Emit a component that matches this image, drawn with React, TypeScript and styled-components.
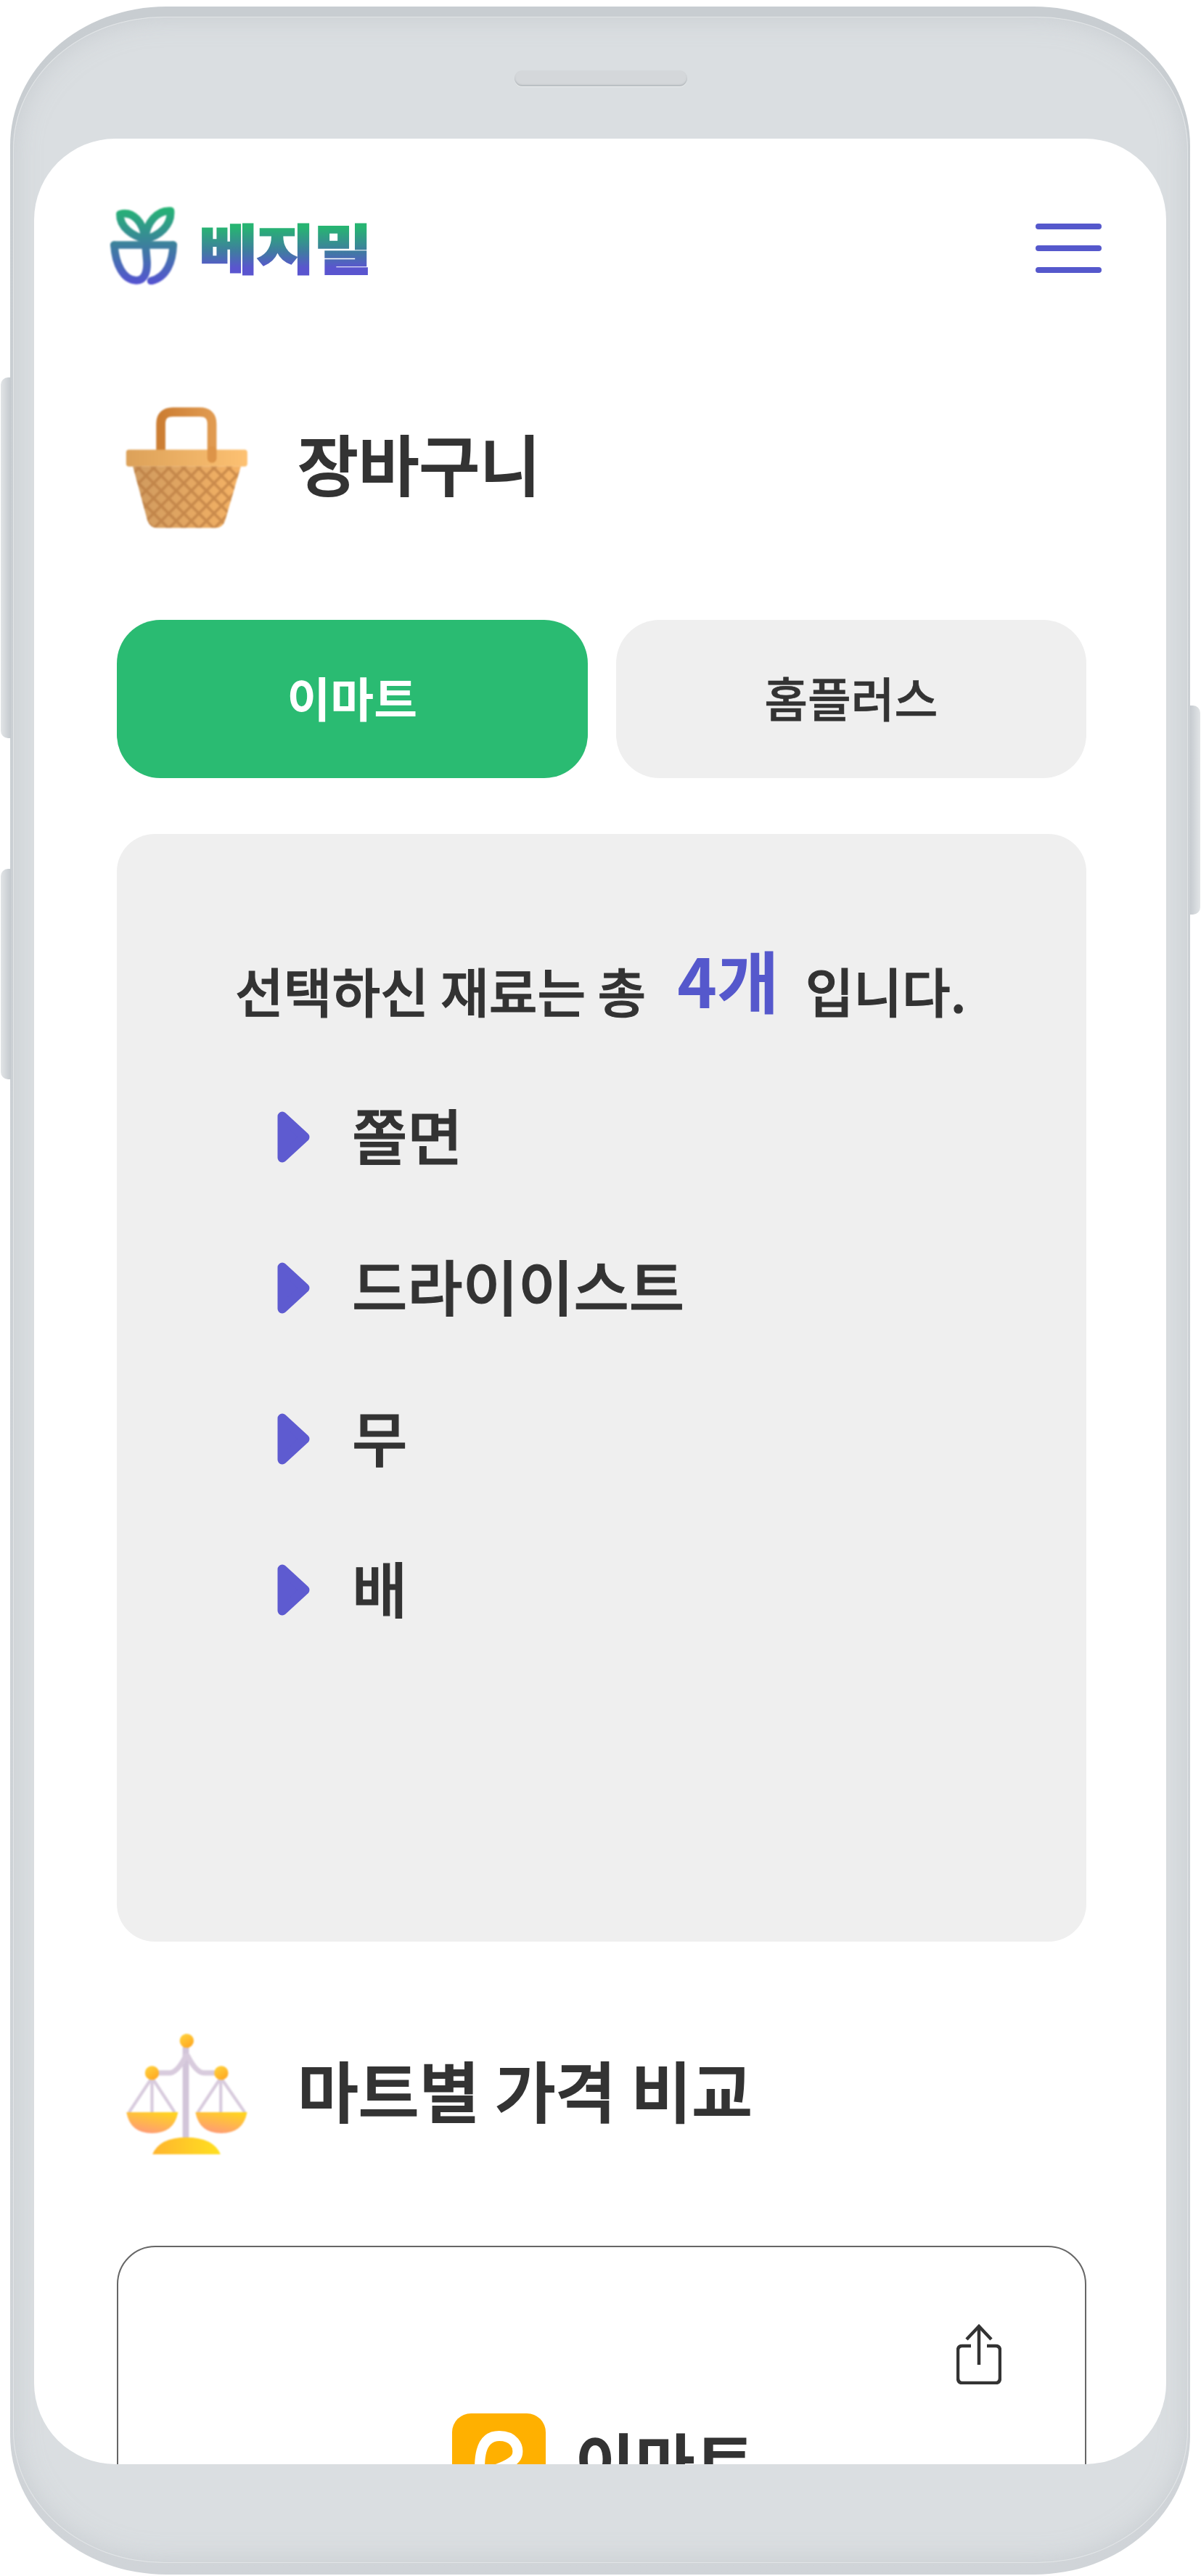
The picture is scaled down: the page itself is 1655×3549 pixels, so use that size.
import React from "react";
import styled, { createGlobalStyle } from "styled-components";

const GlobalStyle = createGlobalStyle`
  html, body {
    margin: 0;
    padding: 0;
    background: #ffffff;
  }
  * {
    box-sizing: border-box;
  }
`;

const Page = styled.div`
  width: 1655px;
  height: 3549px;
  padding: 9px 15px 2px 14px;
  overflow: hidden;
  font-family: "Noto Sans CJK KR", "Noto Sans", sans-serif;
  color: #333333;
`;

const Phone = styled.div`
  position: relative;
  height: 3538px;
  padding: 182px 33px 152px 33px;
  border-radius: 215px / 192px;
  background: linear-gradient(180deg, #c8cdd1 0%, #d0d4d8 100%);
  &::before {
    content: "";
    position: absolute;
    top: 14px;
    left: 4px;
    right: 3px;
    bottom: 16px;
    border-radius: 208px / 182px;
    border: 1px solid #e2e5e7;
    background: #dadee1;
    box-shadow: inset 0 0 34px rgba(184, 190, 195, 0.55);
  }
`;

const SideButton = styled.div<{ $side: "left" | "right"; $top: number; $height: number }>`
  position: absolute;
  top: ${(p) => p.$top}px;
  height: ${(p) => p.$height}px;
  width: 14px;
  ${(p) =>
    p.$side === "left"
      ? `left: -13px; border-radius: 10px 0 0 10px; background: linear-gradient(90deg, #e2e5e7, #c4c9ce);`
      : `right: -14px; border-radius: 0 10px 10px 0; background: linear-gradient(90deg, #c6cbd0, #e2e5e7);`}
`;

const Speaker = styled.div`
  position: absolute;
  top: 88px;
  left: 695px;
  width: 238px;
  height: 22px;
  border-radius: 11px;
  background: #d4d7da;
  box-shadow: inset 0 -2px 2px rgba(170, 175, 180, 0.7), 0 1px 0 rgba(240, 242, 243, 0.8);
`;

const Screen = styled.div`
  position: relative;
  height: 3204px;
  overflow: hidden;
  border-radius: 112px;
  background: #ffffff;
`;

const Header = styled.header`
  display: flex;
  align-items: flex-start;
  justify-content: space-between;
  padding: 94px 89px 0 105px;
`;

const Logo = styled.div`
  display: flex;
  align-items: center;
  gap: 30px;
`;

const WordMark = styled.span`
  font-size: 88px;
  line-height: 107px;
  font-weight: 900;
  letter-spacing: -2px;
  -webkit-text-stroke: 2px transparent;
  background: linear-gradient(180deg, #27b472 22%, #3f7d9f 58%, #5a55cf 84%);
  -webkit-background-clip: text;
  background-clip: text;
  color: transparent;
  transform: scaleY(0.84);
`;

const MenuButton = styled.button`
  display: flex;
  flex-direction: column;
  gap: 22px;
  width: 91px;
  margin-top: 23px;
  padding: 0;
  border: 0;
  background: none;
`;

const MenuBar = styled.span`
  display: block;
  height: 8px;
  border-radius: 4px;
  background: #5558cc;
`;

const Content = styled.main`
  padding: 168px 110px 0 114px;
`;

const TitleRow = styled.div`
  display: flex;
  align-items: center;
  gap: 69px;
  padding-left: 12px;
`;

const Title = styled.h2`
  margin: 0;
  padding-bottom: 16px;
  font-size: 91px;
  line-height: 152px;
  font-weight: 500;
  -webkit-text-stroke: 2px #333333;
  color: #333333;
`;

const Tabs = styled.div`
  display: grid;
  grid-template-columns: 1fr 1fr;
  gap: 39px;
  margin-top: 126px;
`;

const Tab = styled.button<{ $active?: boolean }>`
  height: 218px;
  padding: 0 0 6px;
  border: 0;
  border-radius: 60px;
  font-family: inherit;
  font-size: 65px;
  font-weight: ${(p) => (p.$active ? 700 : 500)};
  -webkit-text-stroke: ${(p) => (p.$active ? "0" : "0.6px #333333")};
  color: ${(p) => (p.$active ? "#ffffff" : "#333333")};
  background: ${(p) => (p.$active ? "#2abb72" : "#efefef")};
`;

const Panel = styled.section`
  height: 1526px;
  margin-top: 77px;
  margin-bottom: 126px;
  padding: 153px 0 0 163px;
  border-radius: 52px;
  background: #efefef;
`;

const Summary = styled.p`
  height: 100px;
  margin: 0;
  font-size: 72.5px;
  line-height: 100px;
  font-weight: 500;
  -webkit-text-stroke: 1.2px #333333;
  white-space: nowrap;
`;

const Count = styled.strong`
  margin: 0 36px 0 43px;
  font-size: 93px;
  line-height: 1;
  font-weight: 700;
  vertical-align: 6px;
  color: #5558cc;
  -webkit-text-stroke: 0;
`;

const IngredientList = styled.ul`
  display: flex;
  flex-direction: column;
  gap: 108px;
  margin: 110px 0 0 58px;
  padding: 0;
  list-style: none;
`;

const Ingredient = styled.li`
  display: flex;
  align-items: center;
  gap: 58px;
  height: 100px;
  font-size: 83px;
  font-weight: 500;
  -webkit-text-stroke: 1.2px #333333;
`;

const ArrowMark = styled.svg`
  margin-top: 8px;
`;

const Card = styled.article`
  min-height: 700px;
  margin-top: 125px;
  padding: 106px 115px 0;
  border: 2px solid #666666;
  border-radius: 53px;
`;

const CardTop = styled.div`
  display: flex;
  justify-content: flex-end;
`;

const Brand = styled.div`
  display: flex;
  align-items: center;
  justify-content: center;
  gap: 40px;
  margin-top: 40px;
  padding-left: 6px;
`;

const BrandName = styled.span`
  font-size: 90px;
  line-height: 129px;
  font-weight: 700;
`;

const SoftIcon = styled.svg`
  filter: blur(0.8px);
`;

function LogoMark() {
  return (
    <SoftIcon width="92" height="107" viewBox="97 105 275 320" fill="none">
      <defs>
        <linearGradient id="logoGrad" gradientUnits="userSpaceOnUse" x1="0" y1="105" x2="0" y2="425">
          <stop offset="0" stopColor="#24b573" />
          <stop offset="0.5" stopColor="#3d7f9e" />
          <stop offset="1" stopColor="#5552d2" />
        </linearGradient>
      </defs>
      <g stroke="url(#logoGrad)" strokeWidth="32" strokeLinecap="round" strokeLinejoin="round">
        <path d="M240 238C190 225 135 190 137 135C190 120 235 170 240 238Z" />
        <path d="M240 238C245 170 290 118 345 122C350 180 300 225 240 238Z" />
        <path d="M113 262H356" />
        <path d="M113 262C118 340 150 408 205 408C240 408 250 370 248 330L240 238" />
        <path d="M356 262C354 330 330 395 265 410" />
      </g>
    </SoftIcon>
  );
}

function BasketIcon() {
  return (
    <SoftIcon width="168" height="167" viewBox="160 930 502 500" fill="none">
      <defs>
        <linearGradient id="rimGrad" x1="0" y1="0" x2="1" y2="0">
          <stop offset="0" stopColor="#dca159" />
          <stop offset="1" stopColor="#fdc172" />
        </linearGradient>
        <linearGradient id="bodyGrad" x1="0" y1="0" x2="1" y2="0">
          <stop offset="0" stopColor="#cf9a5f" />
          <stop offset="1" stopColor="#f6b365" />
        </linearGradient>
        <linearGradient id="handleGrad" x1="0" y1="0" x2="1" y2="0">
          <stop offset="0" stopColor="#cc7e33" />
          <stop offset="1" stopColor="#e09a50" />
        </linearGradient>
        <pattern id="weave" width="44" height="44" patternUnits="userSpaceOnUse" patternTransform="rotate(45 400 1280)">
          <path d="M0 22H44M22 0V44" stroke="#b4743c" strokeWidth="11" opacity="0.6" />
        </pattern>
      </defs>
      <path d="M305 1115V1000Q305 950 355 950H465Q516 950 516 1000V1140" stroke="url(#handleGrad)" strokeWidth="38" strokeLinecap="round" />
      <rect x="162" y="1105" width="500" height="70" rx="12" fill="url(#rimGrad)" />
      <path d="M516 1110V1140" stroke="#dd9448" strokeWidth="38" strokeLinecap="round" />
      <path d="M190 1175H635L570 1398Q560 1428 530 1428H290Q262 1428 250 1398Z" fill="url(#bodyGrad)" />
      <path d="M190 1175H635L570 1398Q560 1428 530 1428H290Q262 1428 250 1398Z" fill="url(#weave)" />
    </SoftIcon>
  );
}

function ScaleIcon() {
  return (
    <SoftIcon width="168" height="168" viewBox="160 150 502 505" fill="none">
      <defs>
        <linearGradient id="ballGrad" x1="0.2" y1="0" x2="0.8" y2="1">
          <stop offset="0" stopColor="#ffd23c" />
          <stop offset="1" stopColor="#ffa620" />
        </linearGradient>
        <linearGradient id="panGrad" x1="0.8" y1="0" x2="0.3" y2="1">
          <stop offset="0" stopColor="#ffd41f" />
          <stop offset="1" stopColor="#ff9a78" />
        </linearGradient>
        <linearGradient id="baseGrad" x1="0" y1="0" x2="1" y2="0">
          <stop offset="0" stopColor="#ffb52e" />
          <stop offset="1" stopColor="#ffe020" />
        </linearGradient>
      </defs>
      <g stroke="#d8cbdd" strokeLinecap="round">
        <path d="M408 210V585" strokeWidth="26" stroke="#d2c5d9" />
        <path d="M408 245Q372 315 340 315H270" strokeWidth="22" />
        <path d="M416 245Q452 315 484 315H555" strokeWidth="22" />
        <path d="M268 335L175 475M268 335V475M268 335L360 475" strokeWidth="13" />
        <path d="M553 335L460 475M553 335V475M553 335L650 475" strokeWidth="13" />
      </g>
      <circle cx="412" cy="182" r="29" fill="url(#ballGrad)" />
      <circle cx="268" cy="315" r="29" fill="url(#ballGrad)" />
      <circle cx="555" cy="315" r="29" fill="url(#ballGrad)" />
      <path d="M162 478H376Q360 565 268 565Q178 565 162 478Z" fill="url(#panGrad)" />
      <path d="M448 478H662Q646 565 555 565Q464 565 448 478Z" fill="url(#panGrad)" />
      <path d="M270 652Q300 582 410 582Q522 582 552 652Z" fill="url(#baseGrad)" />
    </SoftIcon>
  );
}

function Arrow() {
  return (
    <ArrowMark width="45" height="73" viewBox="0 0 45 73">
      <path
        d="M7 8L38 36.5L7 65Z"
        fill="#5e5bd0"
        stroke="#5e5bd0"
        strokeWidth="13"
        strokeLinejoin="round"
      />
    </ArrowMark>
  );
}

function ShareIcon() {
  return (
    <svg width="62" height="83" viewBox="0 0 62 83" fill="none" stroke="#333333" strokeWidth="4.5">
      <path d="M31 3V56" />
      <path d="M14 21L31 3L48 21" />
      <path d="M20 30H8Q2 30 2 36V74Q2 81 8 81H54Q60 81 60 74V36Q60 30 54 30H42" />
    </svg>
  );
}

function EmartIcon() {
  return (
    <svg width="129" height="129" viewBox="0 0 129 129" fill="none">
      <rect width="129" height="129" rx="26" fill="#ffb000" />
      <path
        d="M40 104C35 62 38 31 65 31C85 31 92 45 90 56C88 69 60 78 40 84"
        stroke="#ffffff"
        strokeWidth="14"
      />
    </svg>
  );
}

const ingredients = ["쫄면", "드라이이스트", "무", "배"];

export default function App() {
  return (
    <Page>
      <GlobalStyle />
      <Phone>
        <SideButton $side="left" $top={511} $height={497} />
        <SideButton $side="left" $top={1188} $height={290} />
        <SideButton $side="right" $top={963} $height={288} />
        <Speaker />
        <Screen>
          <Header>
            <Logo>
              <LogoMark />
              <WordMark>베지밀</WordMark>
            </Logo>
            <MenuButton>
              <MenuBar />
              <MenuBar />
              <MenuBar />
            </MenuButton>
          </Header>
          <Content>
            <TitleRow>
              <BasketIcon />
              <Title>장바구니</Title>
            </TitleRow>
            <Tabs>
              <Tab $active>이마트</Tab>
              <Tab>홈플러스</Tab>
            </Tabs>
            <Panel>
              <Summary>
                선택하신 재료는 총<Count>4개</Count>입니다.
              </Summary>
              <IngredientList>
                {ingredients.map((name) => (
                  <Ingredient key={name}>
                    <Arrow />
                    {name}
                  </Ingredient>
                ))}
              </IngredientList>
            </Panel>
            <TitleRow>
              <ScaleIcon />
              <Title>마트별 가격 비교</Title>
            </TitleRow>
            <Card>
              <CardTop>
                <ShareIcon />
              </CardTop>
              <Brand>
                <EmartIcon />
                <BrandName>이마트</BrandName>
              </Brand>
            </Card>
          </Content>
        </Screen>
      </Phone>
    </Page>
  );
}
